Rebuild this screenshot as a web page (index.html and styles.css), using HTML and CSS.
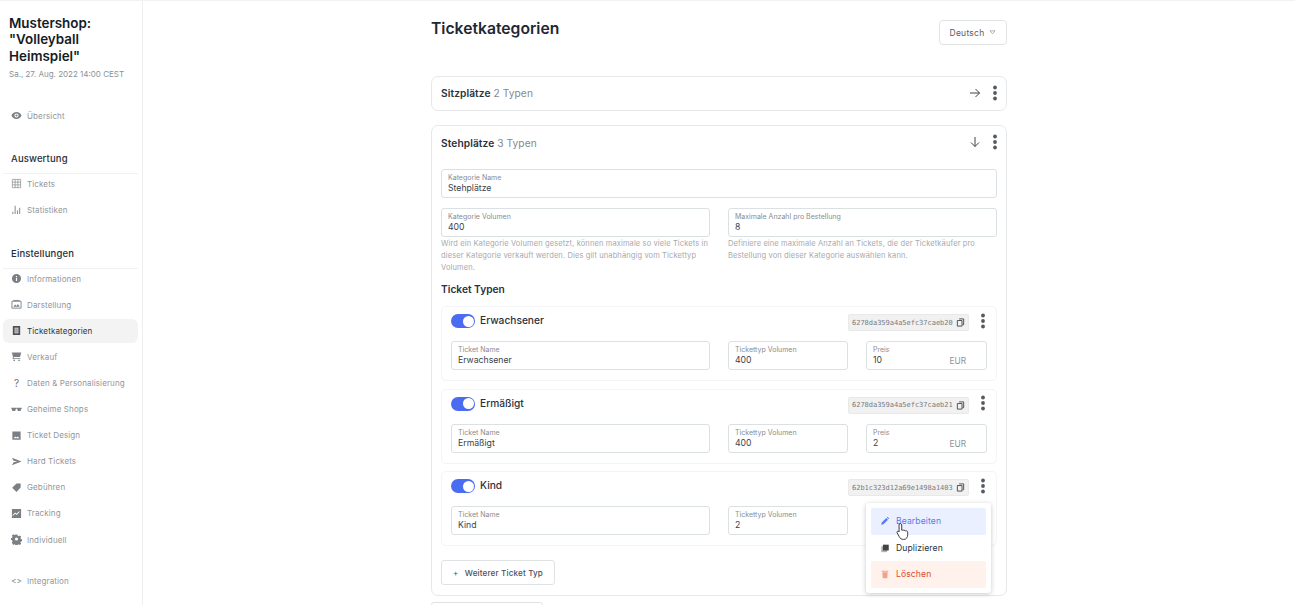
FILE: index.html
```html
<!DOCTYPE html>
<html lang="de"><head><meta charset="utf-8"><title>Ticketkategorien</title>
<link rel="stylesheet" href="styles.css">
</head>
<body>

<svg class="icon-defs" width="0" height="0">
  <defs>
    <symbol id="i-dots" viewBox="0 0 6 16"><circle cx="3" cy="2.500" r="1.900"/><circle cx="3" cy="8" r="1.900"/><circle cx="3" cy="13.500" r="1.900"/></symbol>
    <symbol id="i-copy" viewBox="0 0 10 10"><path d="M3.500 1h5v6.500h-1.200M1.500 2.800h5.200v6.200h-5.200z" fill="none" stroke="currentColor" stroke-width="1"/></symbol>
  </defs>
</svg>

<div class="app">
  <aside class="sidebar">
    <h1 class="shop-name">Mustershop: "Volleyball Heimspiel"</h1>
    <p class="shop-date">Sa., 27. Aug. 2022 14:00 CEST</p>

    <nav class="nav nav-top">
      <a class="nav-item"><svg class="nav-icon" viewBox="0 0 12 12"><path fill-rule="evenodd" d="M6 2.200c2.500 0 4.600 1.500 5.500 3.800-.9 2.300-3 3.800-5.500 3.800S1.400 8.300.5 6C1.400 3.700 3.500 2.200 6 2.200zm0 1.500a2.300 2.300 0 1 0 0 4.600 2.300 2.300 0 0 0 0-4.600zM6 4.800a1.200 1.200 0 1 1 0 2.400 1.200 1.200 0 0 1 0-2.400z"/></svg>Übersicht</a>
    </nav>

    <h2 class="nav-title">Auswertung</h2>
    <nav class="nav">
      <a class="nav-item"><svg class="nav-icon" viewBox="0 0 12 12"><path d="M1.500 1.500h9v9h-9zM1.500 4.500h9M1.500 7.500h9M4.500 1.500v9M7.500 1.500v9" fill="none" stroke="currentColor" stroke-width=".7"/></svg>Tickets</a>
      <a class="nav-item"><svg class="nav-icon" viewBox="0 0 12 12"><path d="M1.500 8.500h1v2.500h-1zM4 2h1v9H4zM6.500 7h1v4h-1zM9 4h1v7H9z"/></svg>Statistiken</a>
    </nav>

    <h2 class="nav-title nav-title-settings">Einstellungen</h2>
    <nav class="nav">
      <a class="nav-item"><svg class="nav-icon" viewBox="0 0 12 12"><path fill-rule="evenodd" d="M6 1a5 5 0 1 1 0 10A5 5 0 0 1 6 1zm-.6 2.300v1.300h1.200V3.300zm0 2.200v3.200h1.200V5.500z"/></svg>Informationen</a>
      <a class="nav-item"><svg class="nav-icon" viewBox="0 0 12 12"><path d="M1 2.500h10v7.500H1z" fill="none" stroke="currentColor"/><path d="M2.500 8.500l2-2.500 1.500 1.500 1.500-2 2 3z"/><path d="M2.500 1h7v1h-7z"/></svg>Darstellung</a>
      <a class="nav-item is-active"><svg class="nav-icon" viewBox="0 0 12 12"><path fill-rule="evenodd" d="M2 1h8v10H2zm2 2v6h4V3z"/><path d="M4.500 3.500h3v5h-3z" opacity=".5"/></svg>Ticketkategorien</a>
      <a class="nav-item"><svg class="nav-icon" viewBox="0 0 12 12"><path d="M.8 1.500h10.400l-1.300 5H3L2.800 7.800h7.400v1H1.800l.3-2.500L1.200 2.500H.8z"/><circle cx="3.500" cy="10.300" r=".9"/><circle cx="8.800" cy="10.300" r=".9"/></svg>Verkauf</a>
      <a class="nav-item"><span class="nav-glyph">?</span>Daten &amp; Personalisierung</a>
      <a class="nav-item"><svg class="nav-icon" viewBox="0 0 12 12"><path d="M.2 4h11.600v1.200h-.6L10.500 7.500h-3L6.600 5.200H5.400L4.500 7.500h-3L.8 5.200H.2z"/></svg>Geheime Shops</a>
      <a class="nav-item"><svg class="nav-icon" viewBox="0 0 12 12"><path fill-rule="evenodd" d="M1.500 1.500h9v9h-9zM2.800 9h6.400L7.400 7 6 8.200 4.600 7.200z"/></svg>Ticket Design</a>
      <a class="nav-item"><svg class="nav-icon" viewBox="0 0 12 12"><path d="M1 1.800L11.500 6 1 10.200l1.800-3.500L7 6l-4.200-.7z"/></svg>Hard Tickets</a>
      <a class="nav-item"><svg class="nav-icon" viewBox="0 0 12 12"><path d="M6 1.500h4.500V6L6 10.800 1.300 6.200z"/></svg>Gebühren</a>
      <a class="nav-item"><svg class="nav-icon" viewBox="0 0 12 12"><path fill-rule="evenodd" d="M1 1h10v10H1zm1.200 7.500l2.300-2.300 1.800 1.500 3.300-3.500-.8-.7-2.600 2.800-1.700-1.500-3 3z"/></svg>Tracking</a>
      <a class="nav-item"><svg class="nav-icon" viewBox="0 0 12 12"><path fill-rule="evenodd" d="M5 .5h2l.3 1.500 1.100.5 1.300-.8 1.400 1.400-.8 1.300.5 1.100 1.400.3v2l-1.400.3-.5 1.100.8 1.300-1.400 1.400-1.300-.8-1.100.5-.3 1.400H5l-.3-1.400-1.100-.5-1.300.8L.9 9.200l.8-1.300-.5-1.100L0 6.500v-2l1.200-.3.500-1.100-.8-1.300 1.400-1.400 1.300.8 1.100-.5zM6 3.800a1.700 1.700 0 1 0 0 3.400 1.700 1.700 0 0 0 0-3.400z"/></svg>Individuell</a>
    </nav>

    <nav class="nav nav-bottom">
      <a class="nav-item"><span class="nav-glyph nav-code">&lt;&gt;</span>Integration</a>
    </nav>
  </aside>

  <main class="content">
    <header class="page-head">
      <h2 class="page-title">Ticketkategorien</h2>
      <button class="lang-btn">Deutsch <svg class="lang-caret" viewBox="0 0 8 6"><path d="M1 1h6L4 4.500z" fill="none" stroke="currentColor" stroke-width=".8"/></svg></button>
    </header>

    <section class="card card-closed">
      <div class="card-head">
        <div class="card-title"><strong>Sitzplätze</strong> 2 Typen</div>
        <svg class="arrow" viewBox="0 0 12 12"><path d="M1 6h9.500M6.500 2l4 4-4 4" fill="none" stroke="currentColor" stroke-width="1"/></svg>
        <svg class="dots"><use href="#i-dots"/></svg>
      </div>
    </section>

    <section class="card">
      <div class="card-head card-head-open">
        <div class="card-title"><strong>Stehplätze</strong> 3 Typen</div>
        <svg class="arrow" viewBox="0 0 12 12"><path d="M6 1v9.500M2 6.500l4 4 4-4" fill="none" stroke="currentColor" stroke-width="1"/></svg>
        <svg class="dots"><use href="#i-dots"/></svg>
      </div>

      <div class="field"><label>Kategorie Name</label><span>Stehplätze</span></div>

      <div class="two-cols">
        <div>
          <div class="field"><label>Kategorie Volumen</label><span>400</span></div>
          <p class="help">Wird ein Kategorie Volumen gesetzt, können maximale so viele Tickets in dieser Kategorie verkauft werden. Dies gilt unabhängig vom Tickettyp Volumen.</p>
        </div>
        <div>
          <div class="field"><label>Maximale Anzahl pro Bestellung</label><span>8</span></div>
          <p class="help">Definiere eine maximale Anzahl an Tickets, die der Ticketkäufer pro Bestellung von dieser Kategorie auswählen kann.</p>
        </div>
      </div>

      <h3 class="types-title">Ticket Typen</h3>

      <div class="ticket">
        <div class="ticket-head">
          <span class="toggle"></span>
          <span class="ticket-name">Erwachsener</span>
          <span class="chip">6278da359a4a5efc37caeb20 <svg class="copy"><use href="#i-copy"/></svg></span>
          <svg class="dots"><use href="#i-dots"/></svg>
        </div>
        <div class="ticket-fields">
          <div class="field"><label>Ticket Name</label><span>Erwachsener</span></div>
          <div class="field"><label>Tickettyp Volumen</label><span>400</span></div>
          <div class="field"><label>Preis</label><span>10</span><em>EUR</em></div>
        </div>
      </div>

      <div class="ticket">
        <div class="ticket-head">
          <span class="toggle"></span>
          <span class="ticket-name">Ermäßigt</span>
          <span class="chip">6278da359a4a5efc37caeb21 <svg class="copy"><use href="#i-copy"/></svg></span>
          <svg class="dots"><use href="#i-dots"/></svg>
        </div>
        <div class="ticket-fields">
          <div class="field"><label>Ticket Name</label><span>Ermäßigt</span></div>
          <div class="field"><label>Tickettyp Volumen</label><span>400</span></div>
          <div class="field"><label>Preis</label><span>2</span><em>EUR</em></div>
        </div>
      </div>

      <div class="ticket">
        <div class="ticket-head">
          <span class="toggle"></span>
          <span class="ticket-name">Kind</span>
          <span class="chip">62b1c323d12a69e1498a1403 <svg class="copy"><use href="#i-copy"/></svg></span>
          <svg class="dots"><use href="#i-dots"/></svg>
        </div>
        <div class="ticket-fields">
          <div class="field"><label>Ticket Name</label><span>Kind</span></div>
          <div class="field"><label>Tickettyp Volumen</label><span>2</span></div>
          <div class="field"></div>
        </div>

        <div class="menu">
          <a class="menu-item menu-edit"><svg viewBox="0 0 12 12"><path d="M1.500 10.500l.6-2.600 5.500-5.500 2 2-5.500 5.500zM8.300 1.700l.8-.7 1.900 1.900-.7.800z"/></svg>Bearbeiten</a>
          <a class="menu-item menu-dup"><svg viewBox="0 0 12 12"><path d="M1.500 4h7v7h-7z" opacity=".4"/><path d="M3.500 2h7v7h-7z"/></svg>Duplizieren</a>
          <a class="menu-item menu-del"><svg viewBox="0 0 12 12"><path d="M2 2h8v1.200H2zM2.800 3.800h6.400l-.5 7.200H3.300z"/></svg>Löschen</a>
          <svg class="cursor" viewBox="0 0 14 18"><path d="M4 1.500c.8 0 1.300.6 1.300 1.300v5l.6-.1c.6-.2 1.200 0 1.500.3.600-.3 1.300-.1 1.600.4.700-.3 1.400 0 1.700.6.200.5.300 1.500.3 2.900 0 2.500-1.200 4.600-3.800 4.600-2.300 0-3.300-.8-4.400-2.800L1 10.300c-.4-.7-.1-1.300.4-1.500.5-.2 1 0 1.300.5l.1.200V2.800C2.800 2.100 3.300 1.500 4 1.500z" fill="#fff" stroke="#333" stroke-width=".9"/></svg>
        </div>
      </div>

      <button class="add-btn"><span>+</span> Weiterer Ticket Typ</button>
    </section>

    <div class="add-category"></div>
  </main>
</div>

</body></html>
```

FILE: styles.css
```css
:root {
  --ink: #1f2733;
  --muted: #8a8f96;
  --line: #e6e8ea;
  --field-line: #dbe0e2;
  --blue: #4a6cf0;
}

* { box-sizing: border-box; }

html, body {
  margin: 0;
  height: 605px;
  overflow: hidden;
}

body {
  background: #fff;
  color: var(--ink);
  font-family: Inter, "Noto Sans", sans-serif;
  border-top: 1px solid #f1f2f3;
}

.icon-defs { position: absolute; }

.app { display: flex; height: 100%; }

/* sidebar */
.sidebar {
  width: 143px;
  flex: none;
  border-right: 1px solid #eceef0;
  padding: 13.500px 4px 0 3px;
}

.shop-name {
  margin: 0 0 0 6px;
  font-size: 13.400px;
  line-height: 16.500px;
  font-weight: 600;
  color: #151b26;
  width: 100px;
}

.shop-date {
  margin: 4px 0 0 6px;
  font-size: 8px;
  line-height: 12px;
  color: #8b9096;
}

.nav-top { margin-top: 23.500px; }

.nav-title {
  margin: 24px 0 0;
  padding: 0 0 7px 8px;
  font-size: 9.500px;
  line-height: 14px;
  font-weight: 500;
  letter-spacing: .15px;
  color: #27303a;
  border-bottom: 1px solid #f0f1f2;
}

.nav-title-settings { margin-top: 25px; }

.nav-item {
  display: flex;
  align-items: center;
  gap: 5px;
  height: 24px;
  margin-bottom: 2.100px;
  padding-left: 8px;
  border-radius: 6px;
  font-size: 8px;
  letter-spacing: .12px;
  color: #92969b;
}

.nav-title + .nav { margin-top: -2px; }

.nav-icon {
  width: 11px;
  height: 11px;
  flex: none;
  fill: #7c8085;
  color: #7c8085;
}

.nav-glyph {
  width: 11px;
  flex: none;
  text-align: center;
  font-size: 10px;
  color: #6f7378;
}

.nav-code { font-size: 8px; letter-spacing: 0; white-space: nowrap; }

.nav-item.is-active {
  background: #f3f3f4;
  color: #2c3440;
}

.nav-item.is-active .nav-icon { fill: #4d5156; }

.nav-bottom { margin-top: 17px; }

/* main column */
.content {
  width: 576px;
  margin-left: 288px;
  flex: none;
}

.page-head {
  display: flex;
  align-items: flex-start;
  justify-content: space-between;
  height: 75px;
  padding-top: 19px;
}

.page-title {
  margin: -1px 0 0;
  font-size: 15.700px;
  line-height: 20px;
  font-weight: 600;
  color: #1f2733;
}

.lang-btn {
  display: flex;
  align-items: center;
  justify-content: center;
  gap: 5px;
  width: 68px;
  height: 25px;
  background: #fff;
  border: 1px solid #e1e3e5;
  border-radius: 4px;
  font: 8.500px Inter, sans-serif;
  letter-spacing: .25px;
  color: #5b6068;
  padding: 0;
}

.lang-caret { width: 7px; height: 5px; color: #8a8f96; }

.card {
  border: 1px solid var(--line);
  border-radius: 7px;
  padding: 0 9px 10px;
  margin-bottom: 6px;
}

.card-closed {
  height: 35px;
  padding-bottom: 0;
  margin-bottom: 14px;
}

.card-head {
  display: flex;
  align-items: center;
  height: 32px;
  gap: 11px;
}

.card-head-open { height: 34px; margin-bottom: 9px; }

.card-title {
  flex: 1;
  font-size: 10.200px;
  letter-spacing: .08px;
  color: #85898f;
}

.card-title strong {
  font-weight: 600;
  color: #2a323d;
}

.arrow { width: 12px; height: 12px; color: #3a4350; flex: none; margin-right: -.5px; }

.dots { width: 6px; height: 16px; fill: #555a60; flex: none; }

.card-head > .dots { margin-right: -.5px; }

.card-head-open > .arrow,
.card-head-open > .dots { margin-top: -3px; }

.field {
  position: relative;
  height: 29px;
  border: 1px solid var(--field-line);
  border-radius: 3px;
  padding: 3px 6px 0;
  background: #fff;
}

.field label {
  display: block;
  font-size: 7px;
  line-height: 10px;
  color: #888c92;
}

.field span {
  display: block;
  font-size: 8.700px;
  line-height: 11px;
  color: #3a424c;
}

.field em {
  position: absolute;
  right: 20px;
  bottom: 3px;
  font-style: normal;
  font-size: 8.300px;
  color: #8f9398;
}

.two-cols {
  display: grid;
  grid-template-columns: 1fr 1fr;
  gap: 18px;
  margin-top: 10px;
}

.help {
  margin: 1px 0 0;
  font-size: 7.500px;
  line-height: 12px;
  letter-spacing: .12px;
  color: #a6a9ad;
}

.types-title {
  margin: 8px 0 10px;
  font-size: 10.200px;
  line-height: 14px;
  font-weight: 600;
  color: #2a323d;
}

.ticket {
  position: relative;
  height: 75px;
  border: 1px solid #f3f4f5;
  border-radius: 5px;
  padding: 6px 9px 0;
  margin-bottom: 7.500px;
}

.ticket-head {
  display: flex;
  align-items: center;
  height: 17px;
  margin-bottom: 11px;
}

.toggle {
  position: relative;
  width: 24px;
  height: 14px;
  border-radius: 7px;
  background: var(--blue);
  margin: -1px 5px 0 0;
  flex: none;
}

.toggle::after {
  content: "";
  position: absolute;
  right: 1.500px;
  top: 1.500px;
  width: 11px;
  height: 11px;
  border-radius: 50%;
  background: #fff;
}

.ticket-name {
  flex: 1;
  font-size: 10.200px;
  font-weight: 500;
  color: #2a323d;
  margin-top: -3px;
}

.chip {
  display: flex;
  align-items: center;
  justify-content: space-between;
  width: 121px;
  height: 17px;
  padding: 0 3px 0 3px;
  background: #f1f1f1;
  border: 1px solid #e9e9e9;
  border-radius: 2px;
  font-family: "DejaVu Sans Mono", monospace;
  font-size: 7px;
  letter-spacing: -.02px;
  color: #777b80;
  margin: 2px 11px 0 0;
}

.copy { width: 9px; height: 9px; color: #444; flex: none; }

.ticket-head .dots { margin: -2px 1px 0 0; }

.ticket-fields {
  display: grid;
  grid-template-columns: 259px 120px 121px;
  gap: 18px;
}

/* dropdown on the third ticket */
.menu {
  position: absolute;
  left: 424px;
  top: 31px;
  width: 125px;
  height: 90px;
  padding: 5px;
  background: #fff;
  border-radius: 3px;
  box-shadow: 0 1px 5px rgba(0, 0, 0, .22);
  z-index: 2;
}

.menu-item {
  display: flex;
  align-items: center;
  gap: 6px;
  height: 26.500px;
  padding-left: 9px;
  border-radius: 2px;
  font-size: 8.600px;
  letter-spacing: .1px;
}

.menu-item svg { width: 10px; height: 10px; flex: none; }

.menu-edit { background: #eaf0ff; color: #5a78ee; }
.menu-edit svg { fill: #5a78ee; }
.menu-dup { color: #2a323d; }
.menu-dup svg { fill: #444; }
.menu-del { background: #fff1ec; color: #d9502e; }
.menu-del svg { fill: #f3a08c; }

.cursor {
  position: absolute;
  left: 30px;
  top: 19px;
  width: 15px;
  height: 19px;
}

.add-btn {
  display: block;
  width: 114px;
  height: 25px;
  margin-top: 14px;
  background: #fff;
  border: 1px solid #dfe2e4;
  border-radius: 3px;
  font: 500 8.100px Inter, sans-serif;
  letter-spacing: .15px;
  color: #4b525c;
  padding: 0;
}

.add-btn span { margin-right: 4px; font-weight: 400; }

.add-category {
  width: 112px;
  height: 25px;
  border: 1px solid #dfe2e4;
  border-radius: 3px;
}
```
